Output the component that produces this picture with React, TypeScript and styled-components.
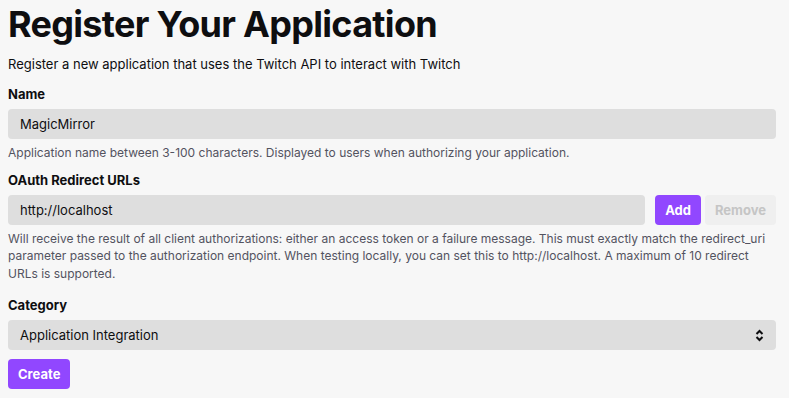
import React from 'react'
import styled, { createGlobalStyle } from 'styled-components'

const GlobalStyle = createGlobalStyle`
  html, body {
    margin: 0;
    padding: 0;
    background: #f7f7f7;
  }
  body {
    font-family: Inter, 'Noto Sans', sans-serif;
    color: #0e0e10;
  }
`

const Page = styled.div`
  padding: 0 13px 0 8px;
`

const Title = styled.h1`
  margin: 0;
  padding-top: 1px;
  font-size: 36px;
  line-height: 46px;
  font-weight: 700;
  letter-spacing: -0.7px;
`

const Lead = styled.p`
  margin: 5px 0 0;
  font-size: 13px;
  line-height: 24px;
`

const Field = styled.div<{ $space?: number }>`
  margin-top: ${({ $space }) => $space ?? 8}px;
`

const Label = styled.label`
  display: block;
  font-size: 13px;
  font-weight: 700;
  line-height: 20px;
  margin-bottom: 5px;
`

const Row = styled.div`
  display: flex;
  gap: 4px;
`

const Input = styled.div`
  flex: 1;
  height: 30px;
  box-sizing: border-box;
  background: #dedede;
  border-radius: 4px;
  padding: 0 12px;
  display: flex;
  align-items: center;
  font-size: 13px;
  justify-content: space-between;
`

const Help = styled.p`
  margin: 5px 0 0;
  font-size: 12px;
  line-height: 17.5px;
  color: #53535f;
`

const Button = styled.button<{ $disabled?: boolean }>`
  height: 30px;
  padding: 0 10px;
  border: none;
  border-radius: 4px;
  font-family: Inter, sans-serif;
  font-size: 13px;
  font-weight: 700;
  background: ${({ $disabled }) => ($disabled ? '#efefef' : '#9147ff')};
  color: ${({ $disabled }) => ($disabled ? '#c5c5c5' : '#ffffff')};
`

const AddButton = styled(Button)`
  margin-left: 6px;
`

const Chevrons = () => (
  <svg width="9" height="13" viewBox="0 0 9 13" fill="none" stroke="#0e0e10" strokeWidth="2">
    <path d="M1.5 5 L4.5 2 L7.5 5" />
    <path d="M1.5 8 L4.5 11 L7.5 8" />
  </svg>
)

const App = () => {
  return (
    <Page>
      <GlobalStyle />
      <Title>Register Your Application</Title>
      <Lead>Register a new application that uses the Twitch API to interact with Twitch</Lead>

      <Field>
        <Label>Name</Label>
        <Input>MagicMirror</Input>
        <Help>Application name between 3-100 characters. Displayed to users when authorizing your application.</Help>
      </Field>

      <Field>
        <Label>OAuth Redirect URLs</Label>
        <Row>
          <Input>http://localhost</Input>
          <AddButton>Add</AddButton>
          <Button $disabled>Remove</Button>
        </Row>
        <Help>
          Will receive the result of all client authorizations: either an access token or a failure message. This must
          exactly match the redirect_uri parameter passed to the authorization endpoint. When testing locally, you can
          set this to http://localhost. A maximum of 10 redirect URLs is supported.
        </Help>
      </Field>

      <Field $space={13}>
        <Label>Category</Label>
        <Input>
          Application Integration
          <Chevrons />
        </Input>
      </Field>

      <Field $space={9}>
        <Button>Create</Button>
      </Field>
    </Page>
  )
}

export default App
